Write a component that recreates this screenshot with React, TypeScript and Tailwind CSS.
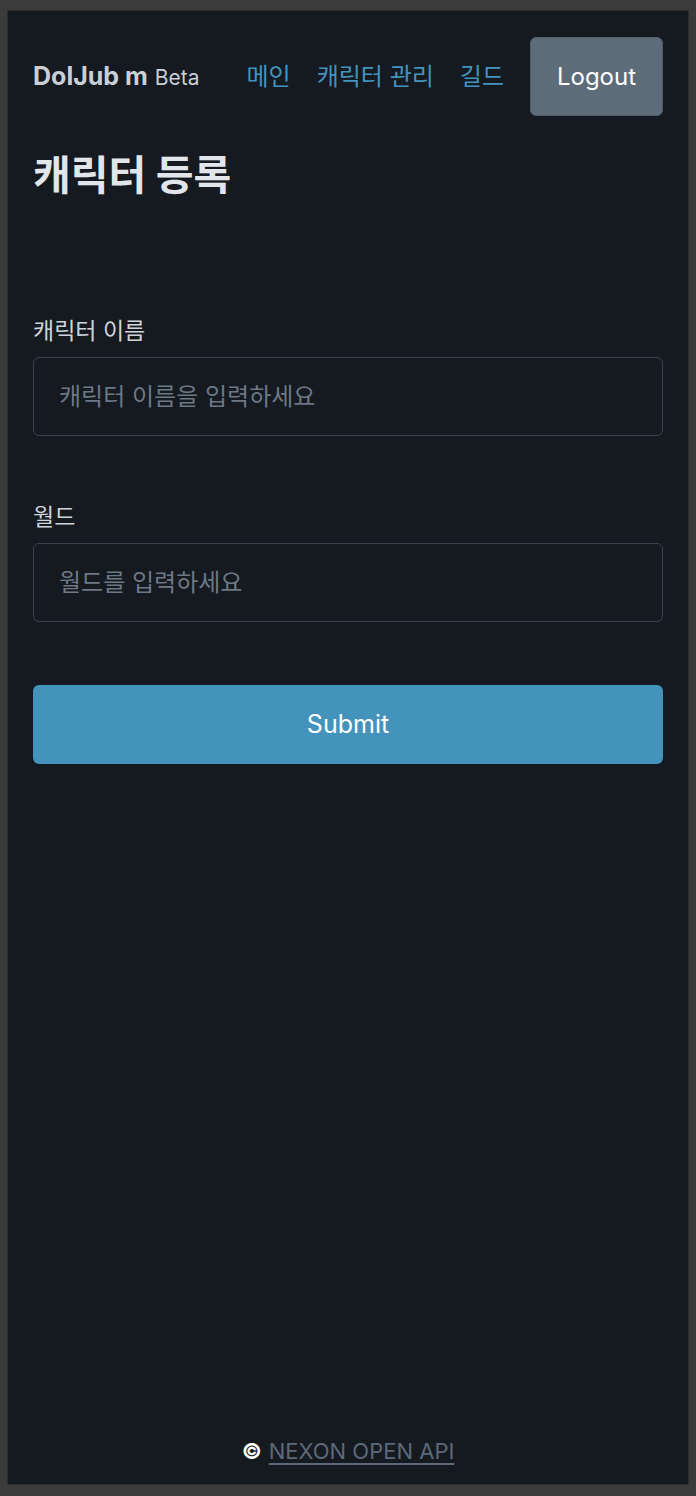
import { useState } from "react"

const font = { fontFamily: 'Inter, "Noto Sans CJK KR", sans-serif' }

export default function App() {
  const [name, setName] = useState("")
  const [world, setWorld] = useState("")

  return (
    <div className="flex h-screen flex-col bg-[#3b3b3b] pt-[10px] pb-[11px] px-[7px]" style={font}>
      <div className="flex flex-1 flex-col border border-[#2d2d2d] bg-[#151920] px-[25px]">
        {/* Header */}
        <header className="flex items-center pt-[26px]">
          <div className="flex items-baseline gap-[7px] text-[#c9cfd6]">
            <span className="text-[25px] font-bold">DolJub m</span>
            <span className="text-[21px]">Beta</span>
          </div>
          <nav className="ml-auto flex items-center gap-[26px] text-[24px] text-[#4394bf]">
            <a href="#">메인</a>
            <a href="#">캐릭터 관리</a>
            <a href="#">길드</a>
            <button className="h-[79px] w-[133px] rounded-[6px] border border-[#4f5b67] bg-[#5e6c7a] text-[24px] text-white">
              Logout
            </button>
          </nav>
        </header>

        <h1 className="mt-[34px] text-[41px] font-bold leading-[50px] text-[#e2e5ea]">캐릭터 등록</h1>

        <form className="mt-[115px] flex flex-col" onSubmit={(e) => e.preventDefault()}>
          <label className="text-[23px] leading-[32px] text-[#cfd4da]">캐릭터 이름</label>
          <input
            value={name}
            onChange={(e) => setName(e.target.value)}
            placeholder="캐릭터 이름을 입력하세요"
            className="mt-[10px] h-[79px] rounded-[6px] border border-[#38414c] bg-transparent px-[25px] text-[24px] text-[#cfd4da] outline-none placeholder:text-[#6d7885]"
          />

          <label className="mt-[65px] text-[23px] leading-[32px] text-[#cfd4da]">월드</label>
          <input
            value={world}
            onChange={(e) => setWorld(e.target.value)}
            placeholder="월드를 입력하세요"
            className="mt-[10px] h-[79px] rounded-[6px] border border-[#38414c] bg-transparent px-[25px] text-[24px] text-[#cfd4da] outline-none placeholder:text-[#6d7885]"
          />

          <button type="submit" className="mt-[63px] h-[79px] rounded-[6px] bg-[#4393bd] text-[25px] text-white">
            Submit
          </button>
        </form>

        <footer className="mt-auto flex items-center justify-center gap-[7px] pb-[16px] text-[22px]">
          <span className="text-[22px] font-bold text-white">©</span>
          <a href="#" className="text-[#5b6978] underline underline-offset-[4px]">NEXON OPEN API</a>
        </footer>
      </div>
    </div>
  )
}
